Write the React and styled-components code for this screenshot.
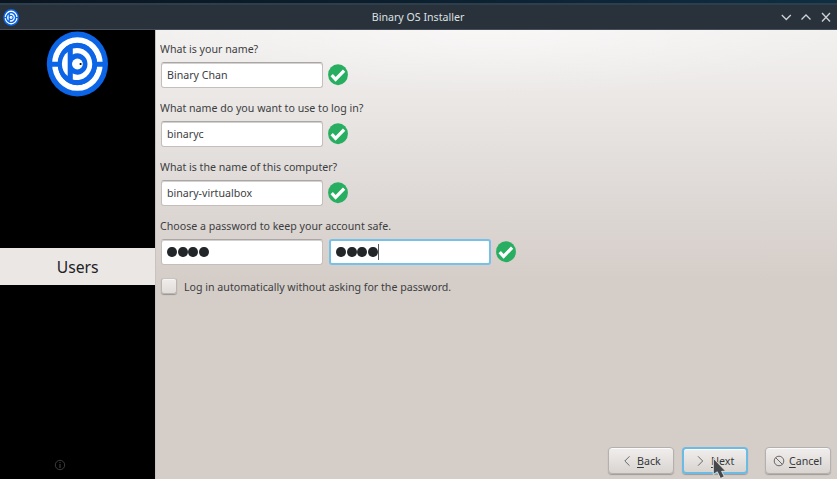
import React from "react";
import styled, { createGlobalStyle, css } from "styled-components";

const Global = createGlobalStyle`
  * { box-sizing: border-box; }
  html, body { margin: 0; padding: 0; overflow: hidden; }
  body { font: 11.5px/16px "Noto Sans", "Open Sans", sans-serif; color: #3b3d3f; }
`;

const Window = styled.div`
  width: 837px;
  height: 479px;
  display: flex;
  flex-direction: column;
  overflow: hidden;
`;

const DesktopEdge = styled.div`
  height: 3px;
  flex: none;
  background: linear-gradient(90deg, #0b1520, #0c1e2c 45%, #0f2e42);
`;

const TitleBar = styled.header`
  height: 27px;
  flex: none;
  display: grid;
  grid-template-columns: 80px 1fr 80px;
  align-items: center;
  background: #29323b;
  border-top: 2px solid #2d3e4c;
  border-bottom: 1px solid #47505a;
`;

const TitleIcon = styled.div`
  display: flex;
  padding-left: 3px;
`;

const Text = styled.span`
  display: inline-block;
  white-space: nowrap;
  transform: scaleX(0.924);
  transform-origin: ${(p) => (p.$center ? "50%" : "0")} 50%;
  u {
    text-underline-offset: 2px;
    text-decoration-thickness: 1px;
  }
`;

const Title = styled.div`
  text-align: center;
  color: #dfe1e3;
`;

const WindowButtons = styled.div`
  display: flex;
  justify-content: flex-end;
  gap: 8px;
  padding-right: 5px;
`;

const Body = styled.div`
  flex: 1;
  display: flex;
  min-height: 0;
`;

const Sidebar = styled.aside`
  width: 155px;
  flex: none;
  background: #000;
  display: flex;
  flex-direction: column;
`;

const LogoArea = styled.div`
  height: 218px;
  padding: 1px 0 0 46px;
`;

const Step = styled.div`
  height: 37px;
  background: #ebe7e4;
  color: #202224;
  font-size: 17px;
  line-height: 37px;
  text-align: center;
`;

const AboutArea = styled.div`
  flex: 1;
  display: flex;
  align-items: flex-end;
  padding: 0 0 8px 54px;
`;

const Page = styled.main`
  flex: 1;
  display: flex;
  flex-direction: column;
  justify-content: space-between;
  border-left: 1px solid #c8c3c0;
  padding: 10px 6px 5px 4px;
  background:
    radial-gradient(ellipse 350px 64px at 50% 0, rgba(255, 255, 255, 0.45), rgba(255, 255, 255, 0)),
    linear-gradient(180deg, #f3f1f0 0, #e9e6e4 80px, #dfdad7 160px, #d5cdc8 250px, #d5cdc8 100%);
`;

const Form = styled.div`
  display: flex;
  flex-direction: column;
`;

const Group = styled.section`
  height: 59px;
`;

const Label = styled.div`
  height: 16px;
  line-height: 17px;
`;

const Row = styled.div`
  display: flex;
  align-items: center;
  gap: 5px;
  margin-top: 6px;
  height: 26px;
`;

const Field = styled.div`
  width: 162px;
  height: 26px;
  margin-left: 1px;
  border: 1px solid #c4bfbb;
  border-top: 1px solid #aaa6a3;
  border-radius: 3px;
  background: #fff;
  box-shadow: inset 0 1px 0 #d4d2d1;
  padding-left: 5px;
  display: flex;
  align-items: center;
  line-height: 24px;
  ${(p) =>
    p.$focused &&
    css`
      border: 2px solid #75c1e8;
      box-shadow: none;
    `}
`;

const Dots = styled.div`
  display: flex;
  gap: 0.6px;
`;

const Dot = styled.i`
  width: 10px;
  height: 10.6px;
  border-radius: 50%;
  background: #232629;
`;

const Caret = styled.i`
  width: 1px;
  height: 16px;
  background: #55585a;
`;

const CheckRow = styled.div`
  display: flex;
  align-items: center;
  gap: 7px;
  height: 18px;
  margin: 1px 0 0 1px;
`;

const Checkbox = styled.div`
  width: 16px;
  height: 16px;
  border: 1px solid #bbb5b0;
  border-top-color: #c9c4c0;
  border-radius: 3px;
  background: linear-gradient(#efedeb, #e0dcd9);
  box-shadow: 0 1px 1px rgba(0, 0, 0, 0.28), inset 0 1px 0 #f7f6f5;
`;

const Footer = styled.footer`
  display: flex;
  justify-content: flex-end;
`;

const Button = styled.div`
  width: 66px;
  height: 27px;
  margin-left: ${(p) => p.$before || 0}px;
  border: 1px solid #b4b0ad;
  border-radius: 4px;
  background: linear-gradient(#f0eeed, #d9d4d0);
  box-shadow: 0 1px 1px rgba(0, 0, 0, 0.25), inset 0 1px 0 #fafafa;
  display: flex;
  align-items: center;
  gap: ${(p) => p.$gap}px;
  padding-left: ${(p) => p.$pad}px;
  color: #35383a;
  ${(p) =>
    p.$focused &&
    css`
      border: 2px solid #6bbbe4;
    `}
`;

const Pointer = styled.svg`
  position: absolute;
  left: 712px;
  top: 457px;
`;

function Logo({ width, height }) {
  return (
    <svg width={width} height={height} viewBox="0 0 62 66" preserveAspectRatio="none">
      <ellipse cx="31.4" cy="33" rx="30.6" ry="32.6" fill="#0b65e6" />
      <ellipse cx="31.4" cy="33" rx="22.5" ry="24" fill="none" stroke="#fff" strokeWidth="5.6" />
      <path d="M3 30.700h56.500v5H3z" fill="#0b65e6" />
      <ellipse cx="31.4" cy="33" rx="19.700" ry="21" fill="#0b65e6" />
      <path d="M21.700 21C18 23.800 15.900 28 15.900 33s2.100 9.200 5.800 12z" fill="#fff" />
      <path
        d="M26.800 17.600A15.300 16 0 1 1 26.800 48.400V42.600A10.200 10.700 0 1 0 26.800 23.400z"
        fill="#fff"
      />
      <circle cx="31.4" cy="33" r="5.400" fill="#fff" />
      <circle cx="34.600" cy="33" r="1.100" fill="#000" />
    </svg>
  );
}

function Check() {
  return (
    <svg width="20" height="22" viewBox="0 0 20 22">
      <ellipse cx="10" cy="10.700" rx="9.900" ry="10.500" fill="#27ae60" />
      <path d="M3.700 11.200l3.900 4.100 8.500-8.700" fill="none" stroke="#fff" strokeWidth="3.300" />
    </svg>
  );
}

function Glyph({ d, color = "#cfd2d4", width = 1.3 }) {
  return (
    <svg width="12" height="12" viewBox="0 0 12 12" fill="none" stroke={color} strokeWidth={width}>
      <path d={d} />
    </svg>
  );
}

const groups = [
  { label: "What is your name?", value: "Binary Chan" },
  { label: "What name do you want to use to log in?", value: "binaryc" },
  { label: "What is the name of this computer?", value: "binary-virtualbox" },
];

const Password = () => (
  <Dots>
    <Dot />
    <Dot />
    <Dot />
    <Dot />
  </Dots>
);

export default function App() {
  return (
    <>
      <Global />
      <Window>
        <DesktopEdge />
        <TitleBar>
          <TitleIcon>
            <Logo width={16} height={17} />
          </TitleIcon>
          <Title>
            <Text $center>Binary OS Installer</Text>
          </Title>
          <WindowButtons>
            <Glyph d="M1.800 4l4.500 4.500L10.800 4" />
            <Glyph d="M1.500 8.500L6 4l4.500 4.500" />
            <Glyph d="M2 2l8 8.500M10 2L2 10.500" />
          </WindowButtons>
        </TitleBar>
        <Body>
          <Sidebar>
            <LogoArea>
              <Logo width={62} height={66} />
            </LogoArea>
            <Step>
              <Text $center>Users</Text>
            </Step>
            <AboutArea>
              <svg width="12" height="12" viewBox="0 0 12 12" fill="none" stroke="#3c3c3c">
                <circle cx="6" cy="6" r="4.700" />
                <path d="M6 3v1M6 5v4" strokeWidth="1.200" />
              </svg>
            </AboutArea>
          </Sidebar>
          <Page>
            <Form>
              {groups.map((g) => (
                <Group key={g.label}>
                  <Label>
                    <Text>{g.label}</Text>
                  </Label>
                  <Row>
                    <Field>
                      <Text>{g.value}</Text>
                    </Field>
                    <Check />
                  </Row>
                </Group>
              ))}
              <Group>
                <Label>
                  <Text>Choose a password to keep your account safe.</Text>
                </Label>
                <Row>
                  <Field>
                    <Password />
                  </Field>
                  <Field $focused>
                    <Password />
                    <Caret />
                  </Field>
                  <Check />
                </Row>
              </Group>
              <CheckRow>
                <Checkbox />
                <Label>
                  <Text>Log in automatically without asking for the password.</Text>
                </Label>
              </CheckRow>
            </Form>
            <Footer>
              <Button $gap={4} $pad={12}>
                <Glyph d="M8.500 1.300L3.800 6l4.700 4.700" color="#66686a" width={1} />
                <Text><u>B</u>ack</Text>
              </Button>
              <Button $gap={4} $pad={11} $before={8} $focused>
                <Glyph d="M3 1.300L7.700 6 3 10.700" color="#66686a" width={1} />
                <Text><u>N</u>ext</Text>
              </Button>
              <Button $gap={4} $pad={7} $before={17}>
                <svg width="12" height="12" viewBox="0 0 12 12" fill="none" stroke="#66686a">
                  <circle cx="6" cy="6" r="4.800" />
                  <path d="M2.600 2.600l6.800 6.800" />
                </svg>
                <Text><u>C</u>ancel</Text>
              </Button>
            </Footer>
          </Page>
        </Body>
        <Pointer width="15" height="22" viewBox="0 0 15 22">
          <path
            d="M1.300 1.300V17.500l4-2.700 3.200 6.700 3.800-2-2.700-5.200h4.200z"
            fill="#45484a"
            stroke="#e8e6e4"
            strokeWidth="0.900"
          />
        </Pointer>
      </Window>
    </>
  );
}
